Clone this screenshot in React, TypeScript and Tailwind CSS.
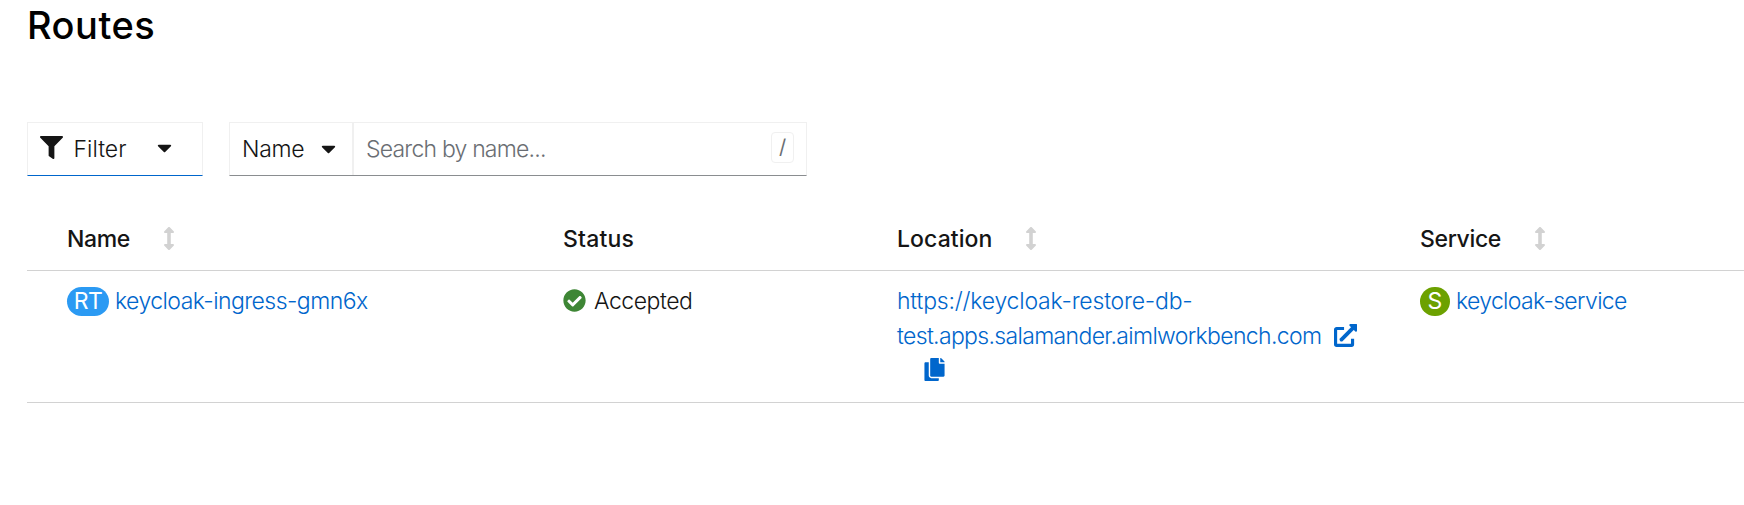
import React from "react";
import { FaArrowsAltV, FaCaretDown, FaCheckCircle, FaCopy, FaFilter } from "react-icons/fa";

function ExternalLinkIcon({ className }: { className: string }) {
  return (
    <svg viewBox="0 0 512 512" className={className} fill="none" stroke="currentColor" strokeWidth="70">
      <path d="M224 99H59a24 24 0 0 0-24 24v330a24 24 0 0 0 24 24h330a24 24 0 0 0 24-24V330" />
      <path d="M166 346 430 82" strokeWidth="84" strokeLinecap="round" />
      <path d="M362 0H500a12 12 0 0 1 12 12V150a22 22 0 0 1-38 15L347 38A22 22 0 0 1 362 0Z" fill="currentColor" stroke="none" />
    </svg>
  );
}

function HeaderCell({ label, tracking, gap, sortable = true }: { label: string; tracking: string; gap: string; sortable?: boolean }) {
  return (
    <div className={`flex items-center font-medium ${gap}`}>
      <span className={`pt-0.5 whitespace-nowrap ${tracking}`}>{label}</span>
      {sortable && <FaArrowsAltV className="h-[23px] w-[12px] text-[#d2d2d2]" />}
    </div>
  );
}

const columns = "grid grid-cols-[496px_334px_523px_324px] pl-10";

export default function App() {
  return (
    <div className="h-[505px] w-full overflow-hidden bg-white pl-[27px] font-['Inter',sans-serif] text-[23px] leading-[35px] font-light text-[#151515]">
      <h1 className="flex h-[122px] items-start text-[38px] leading-[50px] font-medium text-black">
        <span className="tracking-[0.5px]">Routes</span>
      </h1>
      <div className="flex h-[54px] gap-[26px]">
        <button className="flex w-[176px] items-center border border-[#f0f0f0] border-b-[#0066cc] pl-3">
          <FaFilter className="mb-[3px] h-[23px] w-[23px]" />
          <span className="ml-[10px] w-[54px] whitespace-nowrap">Filter</span>
          <FaCaretDown className="mb-[3px] ml-[26px] h-[23px] w-[23px]" />
        </button>
        <div className="flex w-[578px] border border-[#f0f0f0] border-b-[#8a8d90]">
          <button className="flex w-[124px] items-center justify-between border-r-2 border-[#f0f0f0] pr-[12px] pl-[12px]">
            <span className="tracking-[-0.3px]">Name</span>
            <FaCaretDown className="mb-[1px] h-[23px] w-[23px]" />
          </button>
          <div className="flex flex-1 items-center justify-between pr-[12px] pl-[12px] text-[#6a6e73]">
            <span className="tracking-[-0.8px]">Search by name...</span>
            <kbd className="mb-[3px] flex h-[31px] w-[23px] items-center justify-center rounded-[4px] border border-[#f0f0f0] font-['Inter',sans-serif] text-[20px] font-normal">/</kbd>
          </div>
        </div>
      </div>
      <div className="mt-[31px]">
        <div className={`${columns} h-16 items-center border-b border-[#d2d2d2]`}>
          <HeaderCell label="Name" tracking="tracking-[-0.35px]" gap="gap-[33px]" />
          <HeaderCell label="Status" tracking="tracking-[0.2px]" gap="gap-8" sortable={false} />
          <HeaderCell label="Location" tracking="tracking-[0.08px]" gap="gap-[33px]" />
          <HeaderCell label="Service" tracking="tracking-[-0.35px]" gap="gap-[33px]" />
        </div>
        <div className={`${columns} h-[132px] border-b border-[#d2d2d2] pt-[13px]`}>
          <div className="flex h-[35px] items-center">
            <span className="flex h-[29px] w-[42px] items-center justify-center rounded-full bg-[#2b9af3] font-normal tracking-[-0.5px] text-white">RT</span>
            <a className="ml-[6px] whitespace-nowrap tracking-[-0.55px] text-[#0066cc]">keycloak-ingress-gmn6x</a>
          </div>
          <div className="flex h-[35px] items-center">
            <FaCheckCircle className="mb-0.5 h-[23px] w-[23px] text-[#3e8635]" />
            <span className="ml-2 tracking-[-0.45px]">Accepted</span>
          </div>
          <div className="text-[#0066cc]">
            <div><a className="whitespace-nowrap tracking-[-0.2px]">https://keycloak-restore-db-</a></div>
            <div className="flex items-center">
              <a className="whitespace-nowrap tracking-[-0.66px]">test.apps.salamander.aimlworkbench.com</a>
              <ExternalLinkIcon className="mb-0.5 ml-[13px] h-[23px] w-[23px]" />
            </div>
            <FaCopy className="mt-1 ml-[27px] h-[23px] w-[21px]" />
          </div>
          <div className="flex h-[35px] items-center">
            <span className="flex h-[29px] w-[30px] items-center justify-center rounded-full bg-[#6ca100] font-normal text-white">S</span>
            <a className="ml-[6px] whitespace-nowrap tracking-[-0.66px] text-[#0066cc]">keycloak-service</a>
          </div>
        </div>
      </div>
    </div>
  );
}
